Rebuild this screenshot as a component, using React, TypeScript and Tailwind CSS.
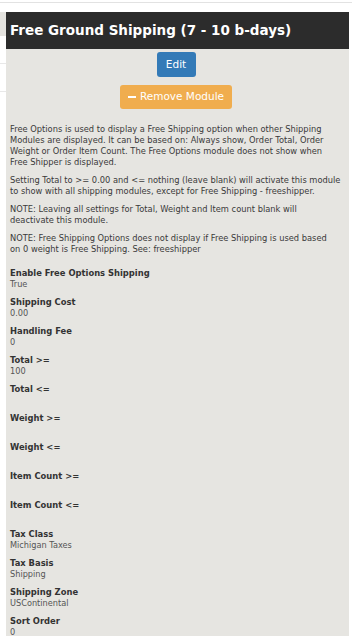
import React from "react";

const fields: [string, string][] = [
  ["Enable Free Options Shipping", "True"],
  ["Shipping Cost", "0.00"],
  ["Handling Fee", "0"],
  ["Total >=", "100"],
  ["Total <=", ""],
  ["Weight >=", ""],
  ["Weight <=", ""],
  ["Item Count >=", ""],
  ["Item Count <=", ""],
  ["Tax Class", "Michigan Taxes"],
  ["Tax Basis", "Shipping"],
  ["Shipping Zone", "USContinental"],
  ["Sort Order", "0"],
];

export default function App() {
  return (
    <div className="w-[352px] h-[640px] bg-white overflow-hidden relative" style={{ fontFamily: '"DejaVu Sans", Verdana, sans-serif' }}>
      <div className="h-[3px] border-b border-[#e2e2e2]" />
      <div className="flex">
        <div className="w-[6px] shrink-0 flex flex-col">
          <div className="h-[9px]" />
          <div className="h-[24px] bg-[#e4e3df]" />
          <div className="h-[28px] border-b border-[#e8e8e8]" />
          <div className="h-[28px] border-b border-[#e8e8e8]" />
        </div>
        <div className="w-[343px] mt-[9px]">
          <div className="h-[37px] bg-[#2c2c2c] flex items-center pl-[4px]">
            <span className="text-white font-bold text-[13.5px]">Free Ground Shipping (7 - 10 b-days)</span>
          </div>
          <div className="bg-[#e6e5e1] pl-[4px] pr-[7px] pb-[6px] h-[587px]">
            <div className="flex flex-col items-center pt-[3px] gap-[8px]">
              <div className="w-[39px] h-[25px] rounded-[3px] bg-[#337ab7] text-white text-[10.5px] flex items-center justify-center">Edit</div>
              <div className="w-[112px] h-[24px] rounded-[3px] bg-[#f0ad4e] text-white text-[10.5px] flex items-center justify-center gap-[4px]">
                <span className="inline-block w-[8px] h-[2px] bg-white" />
                <span>Remove Module</span>
              </div>
            </div>
            <div className="text-[#3a3a3a] text-[8.3px] leading-[11px] mt-[15px] flex flex-col gap-[7px]">
              <p>Free Options is used to display a Free Shipping option when other Shipping Modules are displayed. It can be based on: Always show, Order Total, Order Weight or Order Item Count. The Free Options module does not show when Free Shipper is displayed.</p>
              <p>Setting Total to &gt;= 0.00 and &lt;= nothing (leave blank) will activate this module to show with all shipping modules, except for Free Shipping - freeshipper.</p>
              <p>NOTE: Leaving all settings for Total, Weight and Item count blank will deactivate this module.</p>
              <p>NOTE: Free Shipping Options does not display if Free Shipping is used based<br />on 0 weight is Free Shipping. See: freeshipper</p>
            </div>
            <div className="mt-[13px] flex flex-col">
              {fields.map(([label, value]) => (
                <div key={label} className="h-[29px] flex flex-col">
                  <div className="text-[#333] font-bold text-[8.4px] leading-[11px]">{label}</div>
                  <div className="text-[#555] text-[8.2px] leading-[11px] h-[11px]">{value}</div>
                </div>
              ))}
            </div>
          </div>
        </div>
      </div>
    </div>
  );
}
